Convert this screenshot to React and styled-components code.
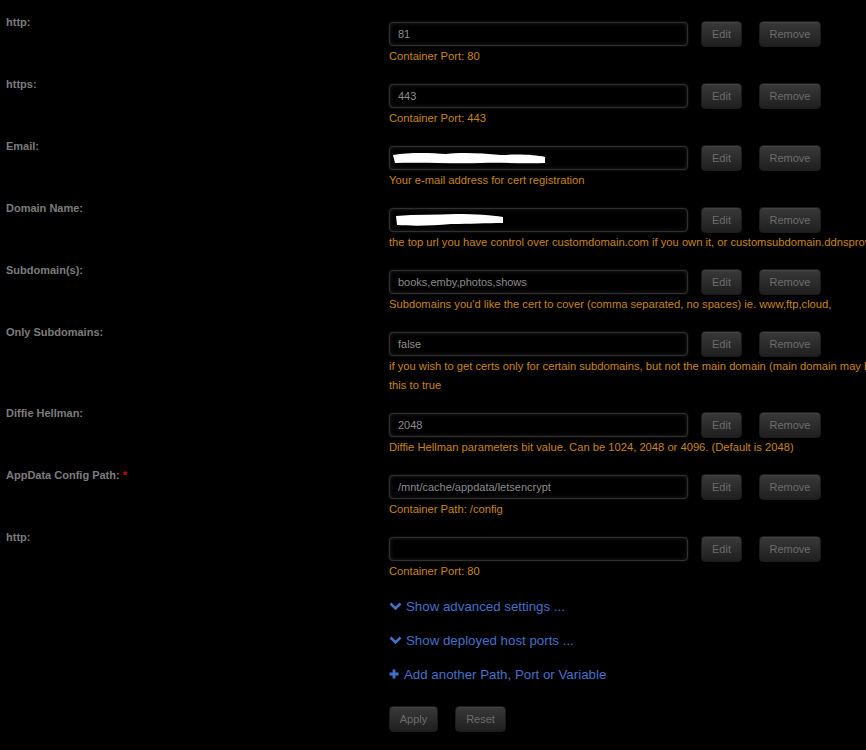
import React from "react";
import styled, { createGlobalStyle } from "styled-components";

const GlobalStyle = createGlobalStyle`
  html, body {
    margin: 0;
    padding: 0;
    background: #000;
    overflow: hidden;
  }
  body {
    font-family: "Liberation Sans", Arial, sans-serif;
  }
`;

// template settings shown on the edit page
const fields = [
  { label: "http:", value: "81", note: "Container Port: 80" },
  { label: "https:", value: "443", note: "Container Port: 443" },
  { label: "Email:", value: "", redacted: "email", note: "Your e-mail address for cert registration" },
  {
    label: "Domain Name:",
    value: "",
    redacted: "domain",
    note: "the top url you have control over customdomain.com if you own it, or customsubdomain.ddnsprovider.com if you don't own a domain",
  },
  {
    label: "Subdomain(s):",
    value: "books,emby,photos,shows",
    note: "Subdomains you'd like the cert to cover (comma separated, no spaces) ie. www,ftp,cloud,",
  },
  {
    label: "Only Subdomains:",
    value: "false",
    note: "if you wish to get certs only for certain subdomains, but not the main domain (main domain may be hosted on another machine and cannot be validated), set this to true",
  },
  {
    label: "Diffie Hellman:",
    value: "2048",
    note: "Diffie Hellman parameters bit value. Can be 1024, 2048 or 4096. (Default is 2048)",
  },
  {
    label: "AppData Config Path:",
    required: true,
    value: "/mnt/cache/appdata/letsencrypt",
    note: "Container Path: /config",
  },
  { label: "http:", value: "", note: "Container Port: 80" },
];

const Chevron = () => (
  <svg width="13" height="10" viewBox="0 0 13 10">
    <path d="M1.5 2.5 L6.5 7.5 L11.5 2.5" fill="none" stroke="#4470c8" strokeWidth="2.6" />
  </svg>
);

const Plus = () => (
  <svg width="10" height="10" viewBox="0 0 10 10">
    <path d="M5 0.5 V9.5 M0.5 5 H9.5" fill="none" stroke="#4470c8" strokeWidth="2.8" />
  </svg>
);

const Scribble = ({ kind }) =>
  kind === "email" ? (
    <ScribbleSvg width="160" height="18" viewBox="0 0 160 18">
      <path
        d="M2 6 C20 3 40 4 55 5 C70 3 90 4 110 6 C130 5 145 6 154 8 L154 14 C130 15 110 13 90 14 C60 15 35 13 4 14 Z"
        fill="#fff"
      />
    </ScribbleSvg>
  ) : (
    <ScribbleSvg width="160" height="18" viewBox="0 0 160 18">
      <path
        d="M5 5 C25 3 45 4 65 3 C85 3 100 4 112 6 L112 12 C95 12 80 13 60 13 C40 15 20 15 6 14 Z"
        fill="#fff"
      />
    </ScribbleSvg>
  );

const App = () => {
  return (
    <>
      <GlobalStyle />
      <Page>
        {fields.map((f, i) => (
          <Row key={i}>
            <Label>
              {f.label}
              {f.required && <Required> *</Required>}
            </Label>
            <Content>
              <Controls>
                <InputWrap>
                  <TextInput readOnly value={f.value} />
                  {f.redacted && <Scribble kind={f.redacted} />}
                </InputWrap>
                <Button>Edit</Button>
                <Button $wide>Remove</Button>
              </Controls>
              <Note>{f.note}</Note>
            </Content>
          </Row>
        ))}
        <Actions>
          <LinkRow>
            <Chevron />
            <span>Show advanced settings ...</span>
          </LinkRow>
          <LinkRow>
            <Chevron />
            <span>Show deployed host ports ...</span>
          </LinkRow>
          <LinkRow $tight>
            <Plus />
            <span>Add another Path, Port or Variable</span>
          </LinkRow>
          <ButtonBar>
            <Button $w={49}>Apply</Button>
            <Button $w={51}>Reset</Button>
          </ButtonBar>
        </Actions>
      </Page>
    </>
  );
};

export default App;

const Page = styled.div`
  width: 1200px;
  padding: 15px 0 0 6px;
`;

const Row = styled.div`
  display: grid;
  grid-template-columns: 383px 1fr;
  margin-bottom: 11px;
`;

const Label = styled.div`
  font-size: 11px;
  font-weight: bold;
  line-height: 14px;
  color: #7c7c7c;
`;

const Required = styled.span`
  color: #e00000;
`;

const Content = styled.div`
  padding-top: 6px;
`;

const Controls = styled.div`
  display: flex;
  align-items: center;
  height: 26px;
`;

const InputWrap = styled.div`
  position: relative;
  width: 299px;
  height: 24px;
  margin-right: 13px;
`;

const TextInput = styled.input`
  box-sizing: border-box;
  width: 100%;
  height: 100%;
  margin: 0;
  padding: 0 8px;
  background: #000;
  border: 1px solid #303030;
  border-radius: 4px;
  box-shadow: inset 0 0 4px rgba(110, 110, 110, 0.3), 0 0 2px rgba(80, 80, 80, 0.5);
  color: #8c8c8c;
  font-family: "Liberation Sans", Arial, sans-serif;
  font-size: 11px;
  outline: none;
`;

const ScribbleSvg = styled.svg`
  position: absolute;
  left: 2px;
  top: 3px;
`;

const Button = styled.button`
  box-sizing: border-box;
  width: ${(p) => (p.$w ? `${p.$w}px` : p.$wide ? "62px" : "41px")};
  height: 26px;
  margin: 0 17px 0 0;
  padding: 0;
  border: 1px solid #1c1c1c;
  border-radius: 4px;
  background: linear-gradient(#393939, #1f1f1f);
  box-shadow: inset 0 1px 0 rgba(255, 255, 255, 0.06);
  color: #6c6c6c;
  font-family: "Liberation Sans", Arial, sans-serif;
  font-size: 11px;
`;

const Note = styled.div`
  width: 790px;
  font-size: 11.2px;
  line-height: 19px;
  color: #c98512;
`;

const Actions = styled.div`
  margin-left: 383px;
  padding-top: 4px;
`;

const LinkRow = styled.div`
  display: flex;
  align-items: center;
  gap: ${(p) => (p.$tight ? "5px" : "4px")};
  height: 20px;
  margin-bottom: 14px;
  color: #4470c8;
  font-size: 13.3px;
`;

const ButtonBar = styled.div`
  display: flex;
  padding-top: 8px;
`;
